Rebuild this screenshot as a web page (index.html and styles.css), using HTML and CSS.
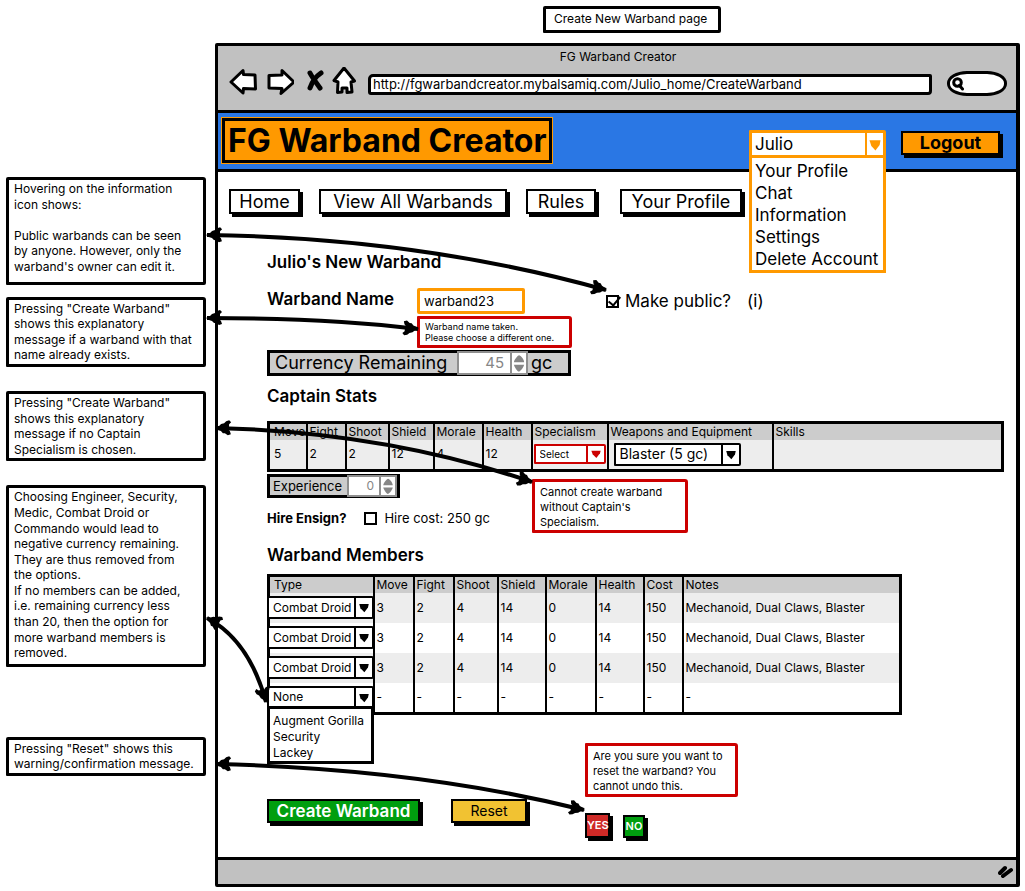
FILE: index.html
```html
<!DOCTYPE html>
<html lang="en">
<head>
<meta charset="utf-8">
<title>Create New Warband page</title>
<link rel="stylesheet" href="styles.css">
</head>
<body>
<div class="board">
  <header class="board-head"><h1 class="box board-title">Create New Warband page</h1></header>

  <aside class="notes">
    <p class="box note note-info">Hovering on the information<br>icon shows:<br><br>Public warbands can be seen<br>by anyone. However, only the<br>warband's owner can edit it.</p>
    <p class="box note note-name">Pressing "Create Warband"<br>shows this explanatory<br>message if a warband with that<br>name already exists.</p>
    <p class="box note note-captain">Pressing "Create Warband"<br>shows this explanatory<br>message if no Captain<br>Specialism is chosen.</p>
    <p class="box note note-members">Choosing Engineer, Security,<br>Medic, Combat Droid or<br>Commando would lead to<br>negative currency remaining.<br>They are thus removed from<br>the options.<br>If no members can be added,<br>i.e. remaining currency less<br>than 20, then the option for<br>more warband members is<br>removed.</p>
    <p class="box note">Pressing "Reset" shows this<br>warning/confirmation message.</p>
  </aside>

  <section class="browser">
    <div class="chrome">
      <div class="chrome-title">FG Warband Creator</div>
      <div class="toolbar">
        <button class="tool" type="button" aria-label="Back"><svg width="28" height="28" viewBox="0 0 28 28"><path class="ink" d="M2 14 L14 2.500 L14.500 6.500 L26 7 L26.500 21 L14.500 20.500 L14 25 Z"/></svg></button>
        <button class="tool" type="button" aria-label="Forward"><svg width="28" height="28" viewBox="0 0 28 28"><path class="ink" d="M28 14 L16 2.500 L16 7 L3 7.500 L3 20 L16 20.500 L15 25.500 Z"/></svg></button>
        <button class="tool tool-stop" type="button" aria-label="Stop"><svg width="18" height="24" viewBox="0 0 18 24"><path class="cross" d="M4 3 C6 7 9 11 14 18 M15 3 C9 7 6 12 4 18"/></svg></button>
        <button class="tool" type="button" aria-label="Home"><svg width="24" height="30" viewBox="0 0 24 30"><path class="ink" d="M12 1 L2 13.500 L6 15 L5.500 25.500 L10 25 L10 21 L15 21 L15 25.500 L20 25 L19 15 L22.500 14 Z"/></svg></button>
        <input class="url" type="text" aria-label="Address" value="http://fgwarbandcreator.mybalsamiq.com/Julio_home/CreateWarband">
        <label class="search"><svg width="12" height="14" viewBox="0 0 12 14"><circle cx="5.500" cy="5.500" r="3.800"/><path d="M7.500 8.500 L10.500 12"/></svg><input type="text" aria-label="Search"></label>
      </div>
    </div>

    <div class="banner">
      <h2 class="brand">FG Warband Creator</h2>
      <div class="user">
        <div class="pick pick-user">
          <select aria-label="User menu"><option>Julio</option></select>
          <svg viewBox="0 0 16 24"><path d="M2 8 L14 8 L13 13 L8.500 19 L4 14 Z"/></svg>
        </div>
        <ul class="menu menu-user">
          <li><a href="#profile">Your Profile</a></li>
          <li><a href="#chat">Chat</a></li>
          <li><a href="#info">Information</a></li>
          <li><a href="#settings">Settings</a></li>
          <li><a href="#delete">Delete Account</a></li>
        </ul>
      </div>
      <button class="btn btn-logout" type="button">Logout</button>
    </div>

    <nav class="nav">
      <button class="btn btn-home" type="button">Home</button>
      <button class="btn btn-all" type="button">View All Warbands</button>
      <button class="btn btn-rules" type="button">Rules</button>
      <button class="btn btn-profile" type="button">Your Profile</button>
    </nav>

    <form class="form">
      <h3 class="heading">Julio's New Warband</h3>
      <div class="name-row">
        <label class="heading name-label" for="name">Warband Name</label>
        <div class="name-field">
          <input class="name-input" id="name" type="text" value="warband23">
          <p class="alert alert-small">Warband name taken.<br>Please choose a different one.</p>
        </div>
        <label class="public"><input class="check" type="checkbox" checked>Make public?</label>
        <span class="info">(i)</span>
      </div>

      <div class="currency">
        <label for="currency">Currency Remaining</label>
        <span class="spin"><input id="currency" type="number" value="45" disabled><svg viewBox="0 0 14 20"><path d="M1 9 C2 5 6 1 7 1 C9 1 13 6 13 9 Z M1 12 L13 12 C12 16 8 20 7 20 C5 20 2 15 1 12 Z"/></svg></span>
        <span>gc</span>
      </div>

      <h3 class="heading heading-captain">Captain Stats</h3>
      <table class="grid captain">
        <colgroup><col class="c38"><col class="c39"><col class="c43"><col class="c45"><col class="c49"><col class="c49"><col class="c76"><col class="c165"><col></colgroup>
        <thead><tr><th>Move</th><th>Fight</th><th>Shoot</th><th>Shield</th><th>Morale</th><th>Health</th><th>Specialism</th><th>Weapons and Equipment</th><th>Skills</th></tr></thead>
        <tbody><tr><td>5</td><td>2</td><td>2</td><td>12</td><td>4</td><td>12</td>
          <td class="tight"><div class="pick pick-red"><select aria-label="Specialism"><option>Select</option></select><svg viewBox="0 0 16 24"><path d="M1 7 L15 7 L14 11 L8.500 18 L3 12.500 Z"/></svg></div></td>
          <td class="tight"><div class="pick pick-weapon"><select aria-label="Weapons and Equipment"><option>Blaster (5 gc)</option></select><svg viewBox="0 0 16 24"><path d="M2 7.500 L14 7.500 L13 12 L8.500 18 L3.500 13 Z"/></svg></div></td>
          <td></td></tr></tbody>
      </table>

      <div class="captain-more">
        <div class="captain-left">
          <div class="experience">
            <label for="experience">Experience</label>
            <span class="spin spin-small"><input id="experience" type="number" value="0" disabled><svg viewBox="0 0 14 20"><path d="M1 9 C2 5 6 1 7 1 C9 1 13 6 13 9 Z M1 12 L13 12 C12 16 8 20 7 20 C5 20 2 15 1 12 Z"/></svg></span>
          </div>
          <div class="hire"><strong>Hire Ensign?</strong><label><input class="check" type="checkbox">Hire cost: 250 gc</label></div>
        </div>
        <p class="alert alert-captain">Cannot create warband<br>without Captain's<br>Specialism.</p>
      </div>

      <h3 class="heading">Warband Members</h3>
      <table class="grid members">
        <colgroup><col class="c105"><col class="c40"><col class="c40"><col class="c44"><col class="c48"><col class="c50"><col class="c48"><col class="c39"><col></colgroup>
        <thead><tr><th>Type</th><th>Move</th><th>Fight</th><th>Shoot</th><th>Shield</th><th>Morale</th><th>Health</th><th>Cost</th><th>Notes</th></tr></thead>
        <tbody>
          <tr><td class="type"><div class="pick"><select aria-label="Member 1 type"><option>Combat Droid</option></select><svg viewBox="0 0 16 24"><path d="M2 7.500 L14 7.500 L13 12 L8.500 18 L3.500 13 Z"/></svg></div></td><td>3</td><td>2</td><td>4</td><td>14</td><td>0</td><td>14</td><td>150</td><td>Mechanoid, Dual Claws, Blaster</td></tr>
          <tr><td class="type"><div class="pick"><select aria-label="Member 2 type"><option>Combat Droid</option></select><svg viewBox="0 0 16 24"><path d="M2 7.500 L14 7.500 L13 12 L8.500 18 L3.500 13 Z"/></svg></div></td><td>3</td><td>2</td><td>4</td><td>14</td><td>0</td><td>14</td><td>150</td><td>Mechanoid, Dual Claws, Blaster</td></tr>
          <tr><td class="type"><div class="pick"><select aria-label="Member 3 type"><option>Combat Droid</option></select><svg viewBox="0 0 16 24"><path d="M2 7.500 L14 7.500 L13 12 L8.500 18 L3.500 13 Z"/></svg></div></td><td>3</td><td>2</td><td>4</td><td>14</td><td>0</td><td>14</td><td>150</td><td>Mechanoid, Dual Claws, Blaster</td></tr>
          <tr class="last"><td class="type"><div class="pick"><select aria-label="Member 4 type"><option>None</option></select><svg viewBox="0 0 16 24"><path d="M2 7.500 L14 7.500 L13 12 L8.500 18 L3.500 13 Z"/></svg></div>
            <ul class="menu menu-type"><li>Augment Gorilla</li><li>Security</li><li>Lackey</li></ul></td><td>-</td><td>-</td><td>-</td><td>-</td><td>-</td><td>-</td><td>-</td><td>-</td></tr>
        </tbody>
      </table>

      <div class="actions">
        <button class="btn btn-create" type="button">Create Warband</button>
        <button class="btn btn-reset" type="reset">Reset</button>
        <div class="confirm">
          <p class="alert">Are you sure you want to<br>reset the warband? You<br>cannot undo this.</p>
          <div class="answers">
            <button class="btn btn-yes" type="button">YES</button>
            <button class="btn btn-no" type="button">NO</button>
          </div>
        </div>
      </div>
    </form>

    <footer class="status"><svg width="18" height="16" viewBox="0 0 18 16"><path d="M2 9 L7 4 M5 12 L13 6"/></svg></footer>
  </section>

  <svg class="arrows" width="1025" height="891" viewBox="0 0 1025 891" aria-hidden="true">
    <defs>
      <marker id="head" markerUnits="userSpaceOnUse" markerWidth="20" markerHeight="18" refX="17" refY="8" orient="auto-start-reverse">
        <path d="M18 8 L14 10 L12 12 L9 13 L7 15 L4 16 L2 14 L4 12 L4 9 L5 7 L3 5 L2 2 L5 1 L8 3 L10 3 L12 5 L15 6 Z"/>
      </marker>
    </defs>
    <path class="link" d="M207 235 Q420 238 606 290"/>
    <path class="link" d="M207 318 Q330 318 418 329"/>
    <path class="link" d="M216 428 Q385 432 532 482"/>
    <path class="link" d="M207 618 Q249 640 266 702"/>
    <path class="link" d="M216 764 Q420 769 584 810"/>
  </svg>
</div>
</body>
</html>
```
FILE: styles.css
```css
* { box-sizing: border-box; }
body {
  margin: 0;
  background: #fff;
  color: #000;
  font: 12px/1.3 Inter, "Liberation Sans", sans-serif;
}
h1, h2, h3, p, ul { margin: 0; padding: 0; font-size: inherit; font-weight: inherit; }
ul { list-style: none; }
a { color: inherit; text-decoration: none; }
button, input, select { font: inherit; color: inherit; margin: 0; }
input, select { min-width: 0; border-radius: 0; outline: 0; }

.board {
  position: relative;
  display: grid;
  grid-template-columns: 215px minmax(0, 1fr);
  padding: 6px 5px 4px 0;
}
.board-head { grid-column: 1 / -1; height: 37px; padding-left: 543px; }
.box { border: 3px solid #000; border-radius: 2px 3px 2px 1px; background: #fff; }
.board-title { width: fit-content; padding: 2px 11px 3px 8px; line-height: 16px; }

.notes { padding: 134px 9px 0 6px; }
.note { padding: 1px 0 1px 5px; white-space: nowrap; }
.note-info { padding-bottom: 7px; margin-bottom: 12px; }
.note-name { margin-bottom: 24px; }
.note-captain { margin-bottom: 24px; }
.note-members { padding-bottom: 3px; margin-bottom: 70px; }

.browser {
  display: flex;
  flex-direction: column;
  border: 3px solid #000;
  border-right-width: 4px;
  border-radius: 2px;
}
.chrome { padding: 3px 9px 12px 11px; background: #c1c1c1; border-bottom: 3px solid #000; }
.chrome-title { line-height: 16px; text-align: center; }
.toolbar { display: flex; align-items: center; height: 33px; }
.tool { display: flex; margin-right: 9px; padding: 0; border: 0; background: none; }
.tool-stop { margin: 0 8px 0 3px; }
.ink { fill: #fff; stroke: #000; stroke-width: 3; stroke-linejoin: round; }
.cross { fill: none; stroke: #000; stroke-width: 5; stroke-linecap: round; }
.url {
  flex: 1;
  height: 21px;
  margin: 5px 15px 0 3px;
  padding: 0 2px;
  border: 3px solid #000;
  border-radius: 5px 2px 4px 3px;
  background: #fff;
  font-size: 13px;
}
.search {
  display: flex;
  align-items: center;
  width: 60px;
  height: 25px;
  margin-top: 4px;
  padding: 0 2px;
  border: 3px solid #000;
  border-radius: 20px / 12px;
  background: #fff;
}
.search svg { flex: none; fill: none; stroke: #000; stroke-width: 3; stroke-linecap: round; }
.search input { width: 100%; border: 0; background: none; }

.banner {
  display: flex;
  align-items: flex-start;
  padding: 5px 16px 6px 4px;
  background: #2a77e4;
  border-bottom: 3px solid #000;
}
.brand {
  padding: 0 2px 0 3px;
  border: 3px solid #000;
  outline: 1px solid #ff9900;
  background: #ff9900;
  font-size: 32px;
  line-height: 39px;
  font-weight: 700;
}
.user { position: relative; width: 137px; margin: 12px 15px 0 auto; }

.btn {
  padding: 0;
  border: 2px solid #000;
  background: #fff;
  box-shadow: 3px 3px 0 #000;
  text-align: center;
  white-space: nowrap;
}
.btn-logout { width: 99px; height: 24px; margin-top: 13px; background: #ff9900; font-size: 18px; line-height: 20px; font-weight: 700; }

.pick { display: grid; height: 23px; border: 2px solid #000; border-radius: 1px 2px 2px 1px; background: #fff; }
.pick select {
  grid-area: 1 / 1;
  width: 100%;
  padding: 0 18px 0 4px;
  border: 0;
  background: none;
  appearance: none;
}
.pick svg { grid-area: 1 / 1; justify-self: end; width: 18px; height: 100%; border-left: 2px solid #000; pointer-events: none; }
.pick-user { height: 28px; border: 3px solid #ff9900; font-size: 17px; }
.pick-user select { padding-left: 3px; }
.pick-user svg { border-color: #ff9900; fill: #ff9900; }
.pick-red { height: 20px; border-color: #cc0000; font-size: 10px; }
.pick-red svg { border-color: #cc0000; fill: #cc0000; }
.pick-weapon { width: 127px; margin-left: 4px; font-size: 14px; }

.menu { position: absolute; z-index: 2; background: #fff; white-space: nowrap; }
.menu-user { top: 25px; left: 0; right: 0; padding: 2px 0 0 3px; border: 3px solid #ff9900; font-size: 17px; line-height: 22px; }
.menu-type { top: 23px; left: -3px; right: -1px; padding: 4px 2px 0 3px; border: 3px solid #000; line-height: 16px; }

.nav { display: flex; gap: 19px; padding: 17px 0 0 11px; font-size: 18px; }
.nav .btn { height: 25px; line-height: 21px; }
.btn-home { width: 71px; }
.btn-all { width: 188px; }
.btn-rules { width: 70px; }
.btn-profile { width: 122px; margin-left: 5px; }

.form { padding: 37px 12px 19px 49px; }
.heading { font-size: 17px; line-height: 22px; font-weight: 600; }
.name-row { display: flex; align-items: flex-start; padding: 15px 0 2px; }
.name-label { width: 150px; }
.name-field { width: 155px; }
.name-input { display: block; width: 108px; height: 26px; margin-bottom: 2px; padding: 0 4px; border: 3px solid #ff9900; border-radius: 2px; background: #fff; font-size: 13px; }
.public { display: flex; align-items: center; gap: 6px; margin: 2px 16px 0 34px; font-size: 17px; line-height: 22px; }
.info { margin-top: 2px; font-size: 17px; line-height: 22px; }
.check { position: relative; width: 13px; height: 13px; border: 2px solid #000; background: #fff; appearance: none; }
.check:checked::after { content: ""; position: absolute; left: 3px; top: -3px; width: 5px; height: 10px; border: solid #000; border-width: 0 2px 2px 0; transform: rotate(40deg); }

.alert { width: fit-content; border: 3px solid #cc0000; border-radius: 1px 3px 2px 1px; background: #fff; white-space: nowrap; padding: 3px 5px 0; font-size: 11px; line-height: 15px; }
.alert-small { width: 155px; padding: 2px 5px; font-size: 9px; line-height: 11px; }

.currency { display: flex; align-items: center; gap: 3px; width: 304px; height: 26px; padding: 0 5px; border: 3px solid #000; background: #ccc; font-size: 18px; line-height: 20px; }
.currency label { width: 179px; }
.spin { display: flex; flex: none; width: 71px; height: 24px; border: 2px solid #8f8f8f; background: #fff; color: #868686; font-size: 15px; }
.spin input { flex: 1; width: 0; padding: 0 6px 0 0; border: 0; background: none; text-align: right; appearance: textfield; }
.spin input::-webkit-inner-spin-button { display: none; }
.spin svg { width: 16px; height: 100%; padding: 1px; border-left: 2px solid #8f8f8f; fill: #868686; }
.spin-small { width: 50px; height: 22px; font-size: 12px; }
.spin-small input { padding-right: 5px; }

.heading-captain { padding: 9px 0 14px; }
.grid { table-layout: fixed; border-collapse: collapse; border: 3px solid #000; }
.grid th { height: 17px; padding: 0 2px; background: #ccc; font-weight: 400; line-height: 15px; text-align: left; white-space: nowrap; }
.grid th, .grid td { border-left: 2px solid #000; }
.grid td { height: 30px; padding: 0 2px; line-height: 16px; }
.grid tbody tr:nth-child(odd) { background: #ededed; }
.grid .last td { height: 31px; }
.captain { width: 100%; }
.captain td { height: 31px; }
.captain th:first-child, .captain td:first-child { padding-left: 4px; }
.captain .tight { padding: 0 1px; }
.members { width: 635px; }
.members th:first-child { padding-left: 4px; }
.members .type { position: relative; padding: 0; }
.type .pick { margin: 0 -1px 0 -3px; }
.c38 { width: 38px; } .c39 { width: 39px; } .c40 { width: 40px; } .c43 { width: 43px; } .c44 { width: 44px; }
.c45 { width: 45px; } .c48 { width: 48px; } .c49 { width: 49px; } .c50 { width: 50px; }
.c76 { width: 76px; } .c105 { width: 105px; } .c165 { width: 165px; }

.captain-more { display: flex; align-items: flex-start; padding: 2px 0 11px; }
.captain-left { width: 265px; }
.experience { display: flex; align-items: center; width: 133px; height: 24px; padding-left: 3px; border: 3px solid #000; background: #ccc; font-size: 13px; }
.experience label { flex: 1; }
.hire { display: flex; align-items: center; gap: 18px; padding-top: 12px; font-size: 13px; line-height: 16px; }
.hire strong { font-weight: 700; }
.hire label { display: flex; align-items: center; gap: 7px; }
.alert-captain { width: 156px; margin-top: 5px; }

.heading + .members { margin-top: 8px; }
.actions { display: flex; align-items: flex-start; padding-top: 28px; }
.btn-create { width: 153px; height: 24px; margin: 56px 31px 0 0; background: #009e0f; color: #fff; font-size: 17px; line-height: 20px; font-weight: 600; }
.btn-reset { width: 76px; height: 24px; margin: 56px 58px 0 0; background: #f1c232; font-size: 14px; line-height: 20px; }
.confirm .alert { width: 153px; }
.answers { display: flex; gap: 13px; padding-top: 16px; font-size: 11px; font-weight: 600; color: #fff; }
.btn-yes { width: 25px; height: 25px; background: #cf2a27; }
.btn-no { width: 22px; height: 23px; margin-top: 2px; background: #009e0f; }

.status { display: flex; justify-content: flex-end; align-items: center; height: 27px; margin-top: auto; border-top: 3px solid #000; background: #c1c1c1; }
.status svg { fill: none; stroke: #000; stroke-width: 4; stroke-linecap: round; }

.arrows { position: absolute; top: 0; left: 0; z-index: 3; pointer-events: none; }
.link { fill: none; stroke: #000; stroke-width: 4; marker-start: url(#head); marker-end: url(#head); }
```
